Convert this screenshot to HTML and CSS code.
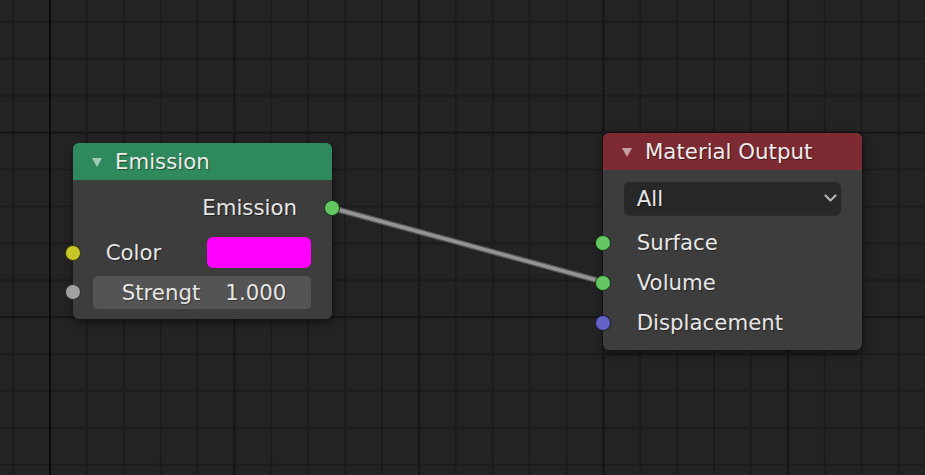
FILE: index.html
```html
<!DOCTYPE html>
<html lang="en">
<head>
<meta charset="utf-8">
<title>Node Editor</title>
<link rel="stylesheet" href="styles.css">
</head>
<body>
<div class="canvas">
  <svg class="links" width="925" height="475" viewBox="0 0 925 475">
    <line class="link-outer" x1="332" y1="208" x2="603.5" y2="282"/>
    <line class="link-inner" x1="332" y1="208" x2="603.5" y2="282"/>
  </svg>

  <div class="node node-emission">
    <div class="node-header header-shader">
      <span class="collapse-tri"></span>
      <span class="node-title">Emission</span>
    </div>
    <div class="node-body">
      <div class="row row-output">
        <span class="label">Emission</span>
        <span class="socket socket-out socket-shader"></span>
      </div>
      <div class="row row-color">
        <span class="socket socket-in socket-color"></span>
        <span class="label label-in">Color</span>
        <span class="swatch"></span>
      </div>
      <div class="row row-strength">
        <span class="socket socket-in socket-value"></span>
        <div class="num-field">
          <span>Strengt</span>
          <span>1.000</span>
        </div>
      </div>
    </div>
  </div>

  <div class="node node-output">
    <div class="node-header header-output">
      <span class="collapse-tri"></span>
      <span class="node-title">Material Output</span>
    </div>
    <div class="node-body body-output">
      <div class="dropdown">
        <span class="dropdown-text">All</span>
        <svg class="chevron" width="13" height="9" viewBox="0 0 13 9">
          <polyline points="1.5,1.5 6.5,6.5 11.5,1.5"/>
        </svg>
      </div>
      <div class="row row-socket first">
        <span class="socket socket-in socket-shader"></span>
        <span class="label label-in">Surface</span>
      </div>
      <div class="row row-socket">
        <span class="socket socket-in socket-shader"></span>
        <span class="label label-in">Volume</span>
      </div>
      <div class="row row-socket">
        <span class="socket socket-in socket-vector"></span>
        <span class="label label-in">Displacement</span>
      </div>
    </div>
  </div>
</div>
</body>
</html>
```
FILE: styles.css
```css
* {
  box-sizing: border-box;
}

html, body {
  margin: 0;
  padding: 0;
  width: 925px;
  height: 475px;
  overflow: hidden;
}

body {
  font-family: "DejaVu Sans", "Liberation Sans", sans-serif;
  font-size: 21.3px;
  color: #e6e6e6;
  background-color: #232323;
}

.canvas {
  position: relative;
  width: 925px;
  height: 475px;
  background-color: #232323;
  background-image:
    linear-gradient(#0b0b0b, #0b0b0b),
    linear-gradient(to right, #161616 2px, transparent 2px),
    linear-gradient(to bottom, #161616 2px, transparent 2px),
    linear-gradient(to right, #1b1b1b 2px, transparent 2px),
    linear-gradient(to bottom, #1b1b1b 2px, transparent 2px);
  background-repeat: no-repeat, repeat-x, repeat-y, repeat-x, repeat-y;
  background-size:
    2px 100%,
    184.5px 100%,
    100% 184.5px,
    36.9px 100%,
    100% 36.9px;
  background-position:
    49px 0,
    49px 0,
    0 131.7px,
    12.1px 0,
    0 21px;
}

.links {
  position: absolute;
  left: 0;
  top: 0;
}

.link-outer {
  stroke: rgba(95, 95, 95, 0.85);
  stroke-width: 6;
  stroke-linecap: round;
}

.link-inner {
  stroke: #949494;
  stroke-width: 3.4;
  stroke-linecap: round;
}

/* Nodes */
.node {
  position: absolute;
  width: 259px;
  border-radius: 6px;
  background: #3d3d3d;
  box-shadow: 1px 3px 9px rgba(0, 0, 0, 0.55);
  display: flex;
  flex-direction: column;
}

.node-emission {
  left: 73px;
  top: 143px;
}

.node-output {
  left: 603px;
  top: 133px;
}

.node-header {
  height: 37px;
  border-radius: 6px 6px 0 0;
  display: flex;
  align-items: center;
  padding-left: 19px;
}

.header-shader {
  background: #2e8a5c;
}

.header-output {
  background: #7e2a32;
}

.collapse-tri {
  width: 0;
  height: 0;
  border-left: 5.5px solid transparent;
  border-right: 5.5px solid transparent;
  border-top: 9px solid rgba(255, 255, 255, 0.55);
  margin-top: 2px;
}

.node-title {
  margin-left: 13px;
  text-shadow: 1px 1px 1px rgba(0, 0, 0, 0.45);
  color: #ececec;
}

.node-body {
  padding: 10px 21px 10px 20px;
  display: flex;
  flex-direction: column;
}

.body-output {
  padding: 12px 21px 7px 21px;
}

.row {
  position: relative;
  display: flex;
  align-items: center;
}

.label {
  text-shadow: 1px 1px 1px rgba(0, 0, 0, 0.45);
  white-space: nowrap;
}

.label-in {
  padding-left: 12.7px;
}

.row-output {
  height: 35px;
  justify-content: flex-end;
  padding-right: 14px;
}

.row-color {
  height: 35px;
  margin-top: 10px;
}

.row-strength {
  height: 34px;
  margin-top: 5px;
}

.row-socket {
  height: 40px;
}

.row-socket.first {
  margin-top: 8px;
}

/* Sockets */
.socket {
  position: absolute;
  top: 50%;
  width: 16px;
  height: 16px;
  margin-top: -8px;
  border-radius: 50%;
  border: 1px solid rgba(0, 0, 0, 0.7);
}

.node-emission .socket-in {
  left: -28px;
}

.node-emission .socket-out {
  right: -29px;
}

.node-output .socket-in {
  left: -29px;
}

.socket-shader {
  background: #63c763;
}

.socket-color {
  background: #c7c729;
}

.socket-value {
  background: #a1a1a1;
}

.socket-vector {
  background: #6363c7;
}

/* Widgets */
.swatch {
  margin-left: auto;
  width: 104px;
  height: 31px;
  border-radius: 6px;
  background: #ff00ff;
}

.num-field {
  width: 100%;
  height: 33px;
  border-radius: 5px;
  background: #545454;
  display: flex;
  align-items: center;
  justify-content: center;
  gap: 25px;
  padding-left: 4px;
  text-shadow: 1px 1px 1px rgba(0, 0, 0, 0.4);
}

.dropdown {
  height: 32.5px;
  border-radius: 6px;
  background: #282828;
  box-shadow: 0 1px 1px rgba(0, 0, 0, 0.25);
  display: flex;
  align-items: center;
  padding: 0 4px 0 12.7px;
}

.dropdown-text {
  flex: 1;
  text-shadow: 1px 1px 1px rgba(0, 0, 0, 0.45);
}

.chevron {
  margin-top: 1px;
}

.chevron polyline {
  fill: none;
  stroke: #b4b4b4;
  stroke-width: 2.2;
  stroke-linecap: round;
  stroke-linejoin: round;
}
```
